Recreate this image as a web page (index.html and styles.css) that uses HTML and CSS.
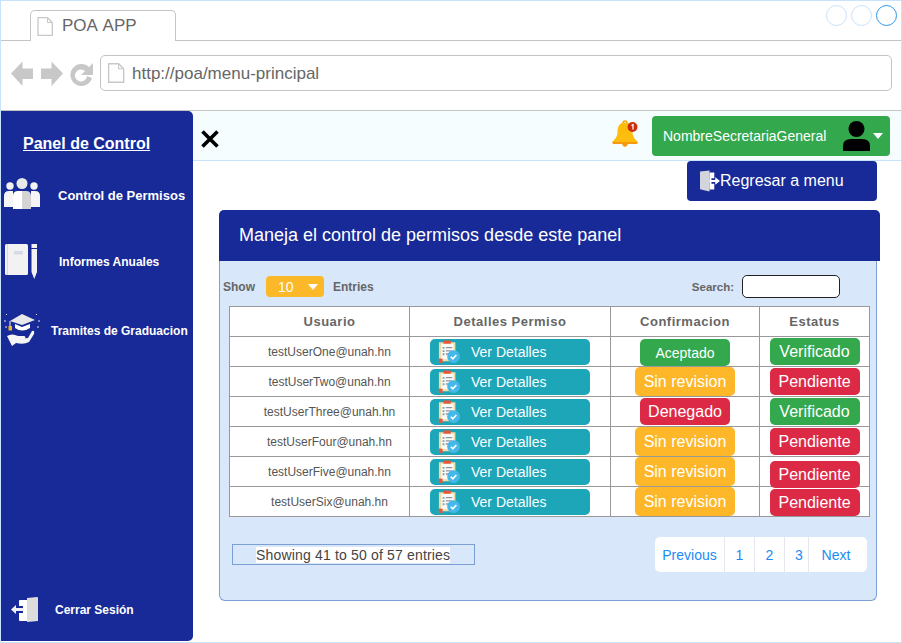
FILE: index.html
```html
<!DOCTYPE html>
<html lang="en">
<head>
    <meta charset="UTF-8">
    <meta name="viewport" content="width=device-width, initial-scale=1.0">
    <title>POA APP</title>
    <link rel="stylesheet" href="styles.css">
</head>
<body>

    <!-- shared icons -->
    <svg class="icon-defs" width="0" height="0">
        <symbol id="fileIcon" viewBox="0 0 16 19">
            <path d="M1 .7H10.500L15.300 5.500V18.300H1Z" fill="#fff" stroke="currentColor" stroke-width="1.300"/>
            <path d="M10.500 .7V5.500H15.300" fill="none" stroke="currentColor" stroke-width="1"/>
        </symbol>
        <symbol id="clipIcon" viewBox="0 0 24 25">
            <path d="M1 2.500H19V23H5L1 25Z" fill="#f3d9a4"/>
            <path d="M3.500 4H17V21H3.500Z" fill="#fbfbf5"/>
            <path d="M6 .5H14V4H6Z" fill="#e4573d"/>
            <path d="M1 20L5 20.500V25H1Z" fill="#e4573d"/>
            <path d="M5 7.500H7V9.500H5ZM8.500 7.500H15.500V9H8.500ZM5 11H7V13H5ZM8.500 11H15.500V12.500H8.500ZM5 14.500H7V16.500H5ZM8.500 14.500H13V16H8.500Z" fill="#8a99a8"/>
            <circle cx="17" cy="18" r="7" fill="#45b8ea"/>
            <path d="M14 18.200L16.200 20.400L20 16.300" fill="none" stroke="#fff" stroke-width="1.800"/>
        </symbol>
    </svg>

    <div class="window">

        <div class="tab-row">
            <div class="tab">
                <svg class="tab-file" width="16" height="19"><use href="#fileIcon"/></svg>
                <span>POA APP</span>
            </div>
            <div class="win-buttons">
                <span class="win-btn"></span>
                <span class="win-btn"></span>
                <span class="win-btn active"></span>
            </div>
        </div>

        <div class="address-row">
            <svg class="nav-icons" width="84" height="26" viewBox="0 0 84 26">
                <path d="M0 12.500L11.500 .5V7.500H22V18H11.500V25Z" fill="#c8c8c8"/>
                <path d="M52 12.500L40.500 .5V7.500H30V18H40.500V25Z" fill="#c8c8c8"/>
                <path d="M81 17A11 11 0 1 1 78 6L82 2V14H70L74 10A6 6 0 1 0 76 15Z" fill="#c8c8c8"/>
            </svg>
            <div class="url-bar">
                <svg class="url-file" width="18" height="20"><use href="#fileIcon"/></svg>
                <span>http://poa/menu-principal</span>
            </div>
        </div>

        <div class="app">

            <aside class="sidebar">
                <h2 class="side-title">Panel de Control</h2>

                <a class="side-item item-permisos">
                    <svg width="36" height="32" viewBox="0 0 36 32">
                        <circle cx="6" cy="8" r="3.700" fill="#f2f2f2"/>
                        <circle cx="30" cy="8" r="3.700" fill="#f2f2f2"/>
                        <path d="M0 29V18Q0 13 5 13H9V29Z" fill="#f5f5f5"/>
                        <path d="M36 29V18Q36 13 31 13H27V29Z" fill="#f5f5f5"/>
                        <circle cx="18" cy="5.500" r="5.500" fill="#e8e8e8"/>
                        <path d="M9 31V18Q9 13 14 13H18V31Z" fill="#fff"/>
                        <path d="M27 31V18Q27 13 22 13H18V31Z" fill="#d4d4d4"/>
                    </svg>
                    <span>Control de Permisos</span>
                </a>

                <a class="side-item item-informes">
                    <svg width="33" height="35" viewBox="0 0 33 35">
                        <rect x="0" y="0" width="23" height="31" rx="1.500" fill="#f2f2f2"/>
                        <rect x="2" y="0" width="1" height="31" fill="#d8d8d8"/>
                        <rect x="9" y="7" width="9" height="3.500" fill="#d4dbe6"/>
                        <path d="M26.500 0H32V4H26.500ZM26.500 5H32V28L29.250 35L26.500 28Z" fill="#f2f2f2"/>
                    </svg>
                    <span>Informes Anuales</span>
                </a>

                <a class="side-item item-tramites">
                    <svg width="36" height="34" viewBox="0 0 36 34">
                        <path d="M6 9L18 2L31 8L18 13Z" fill="#e8e8e8"/>
                        <path d="M11 12V16Q18 21 26 16V12L18 15Z" fill="#fff"/>
                        <path d="M6 9V14" stroke="#f5f5f5" stroke-width="1"/>
                        <rect x="4.500" y="14" width="3.500" height="4.500" fill="#f0b429"/>
                        <path d="M3 24Q8 21 14 24H20Q23 25 20 27H14L24 26L28 19Q31 18 30 22L25 30Q20 33 12 31L8 34Z" fill="#f5f5f5"/>
                        <path d="M0 9H2M2 2L3 3M34 9H36M33 2L32 3M1 15H3M33 15H35" stroke="#dfe3f0" stroke-width="1"/>
                    </svg>
                    <span>Tramites de Graduacion</span>
                </a>

                <a class="side-item item-cerrar">
                    <svg width="28" height="27" viewBox="0 0 28 27">
                        <path d="M9 4H17V25H9Q8 25 8 24V17H12V10H8V5Q8 4 9 4Z" fill="#fff"/>
                        <path d="M16 2L26 1Q27 1 27 2V25L16 26Z" fill="#dcdcdc"/>
                        <path d="M0 13.500L5 9V12H13V15H5V18Z" fill="#f0f0f0"/>
                    </svg>
                    <span>Cerrar Sesión</span>
                </a>
            </aside>

            <main class="main">
                <div class="topbar">
                    <svg class="close-icon" width="20" height="20" viewBox="0 0 20 20">
                        <path d="M2.500 2.500L17.500 17.500M17.500 2.500L2.500 17.500" stroke="#000" stroke-width="3.600"/>
                    </svg>
                    <svg class="bell-icon" width="28" height="29" viewBox="0 0 28 29">
                        <path d="M12 4a2 2 0 0 1 4 0" fill="none" stroke="#f5a70f" stroke-width="1.500"/>
                        <path d="M14 3.500C8 3.500 6.500 8 6.500 13C6.500 18 4 20 1 23H27C24 20 21.500 18 21.500 13C21.500 8 20 3.500 14 3.500Z" fill="#fdbd0e"/>
                        <path d="M1 23H27L26 25H2Z" fill="#f59a10"/>
                        <path d="M11 25H17Q16 28 14 28Q12 28 11 25Z" fill="#f59a10"/>
                        <circle cx="21.500" cy="8" r="5" fill="#c9300f"/>
                        <path d="M20.500 6.500L22 5.500V10.500" fill="none" stroke="#fff" stroke-width="1.200"/>
                    </svg>
                    <div class="user-menu">
                        <span class="user-name">NombreSecretariaGeneral</span>
                        <svg class="user-icon" width="27" height="30" viewBox="0 0 27 30">
                            <circle cx="13.500" cy="8" r="8" fill="#000"/>
                            <path d="M0 30V25Q0 18 8 18H19Q27 18 27 25V30Z" fill="#000"/>
                        </svg>
                        <span class="caret"></span>
                    </div>
                </div>

                <div class="back-row">
                    <button class="back-btn">
                        <svg width="20" height="22" viewBox="0 0 21 22">
                            <path d="M0 1L10 0V22L1 20Q0 20 0 19Z" fill="#d2d6dc"/>
                            <path d="M10 2H15V8H12V14H15V20H10Z" fill="#fff"/>
                            <path d="M21 11L16 7V10H10V12H16V15Z" fill="#fff"/>
                        </svg>
                        <span>Regresar a menu</span>
                    </button>
                </div>

                <section class="panel">
                    <h1 class="panel-head">Maneja el control de permisos desde este panel</h1>
                    <div class="panel-body">

                        <div class="table-controls">
                            <label class="ctl-label">Show</label>
                            <div class="entries-select"><span>10</span><span class="caret"></span></div>
                            <label class="ctl-label">Entries</label>
                            <label class="ctl-label search-label">Search:</label>
                            <input class="search-input" type="text">
                        </div>

                        <table class="permits">
                            <thead>
                                <tr>
                                    <th class="col-user">Usuario</th>
                                    <th class="col-detail">Detalles Permiso</th>
                                    <th class="col-conf">Confirmacion</th>
                                    <th>Estatus</th>
                                </tr>
                            </thead>
                            <tbody>
                                <tr>
                                    <td class="user-cell">testUserOne@unah.hn</td>
                                    <td><a class="detail-btn"><svg width="22" height="23"><use href="#clipIcon"/></svg>Ver Detalles</a></td>
                                    <td><span class="pill pill-small pill-nudge green">Aceptado</span></td>
                                    <td><span class="pill green">Verificado</span></td>
                                </tr>
                                <tr>
                                    <td class="user-cell">testUserTwo@unah.hn</td>
                                    <td><a class="detail-btn"><svg width="22" height="23"><use href="#clipIcon"/></svg>Ver Detalles</a></td>
                                    <td><span class="pill pill-wide yellow">Sin revision</span></td>
                                    <td><span class="pill red">Pendiente</span></td>
                                </tr>
                                <tr>
                                    <td class="user-cell">testUserThree@unah.hn</td>
                                    <td><a class="detail-btn"><svg width="22" height="23"><use href="#clipIcon"/></svg>Ver Detalles</a></td>
                                    <td><span class="pill red">Denegado</span></td>
                                    <td><span class="pill green">Verificado</span></td>
                                </tr>
                                <tr>
                                    <td class="user-cell">testUserFour@unah.hn</td>
                                    <td><a class="detail-btn"><svg width="22" height="23"><use href="#clipIcon"/></svg>Ver Detalles</a></td>
                                    <td><span class="pill pill-wide yellow">Sin revision</span></td>
                                    <td><span class="pill red">Pendiente</span></td>
                                </tr>
                                <tr>
                                    <td class="user-cell">testUserFive@unah.hn</td>
                                    <td><a class="detail-btn"><svg width="22" height="23"><use href="#clipIcon"/></svg>Ver Detalles</a></td>
                                    <td><span class="pill pill-wide yellow">Sin revision</span></td>
                                    <td><span class="pill pill-low red">Pendiente</span></td>
                                </tr>
                                <tr>
                                    <td class="user-cell">testUserSix@unah.hn</td>
                                    <td><a class="detail-btn"><svg width="22" height="23"><use href="#clipIcon"/></svg>Ver Detalles</a></td>
                                    <td><span class="pill pill-wide yellow">Sin revision</span></td>
                                    <td><span class="pill pill-nudge red">Pendiente</span></td>
                                </tr>
                            </tbody>
                        </table>

                        <div class="table-footer">
                            <div class="showing"><span>Showing 41 to 50 of 57 entries</span></div>
                            <div class="pager">
                                <a class="page-prev">Previous</a>
                                <a class="page-num">1</a>
                                <a class="page-num">2</a>
                                <a class="page-three">3</a>
                                <a class="page-next">Next</a>
                            </div>
                        </div>

                    </div>
                </section>
            </main>

        </div>
    </div>

</body>
</html>
```

FILE: styles.css
```css
* {
    box-sizing: border-box;
}
body {
    margin: 0;
    font-family: "Liberation Sans", Arial, sans-serif;
    background: #fff;
    overflow: hidden;
}
.icon-defs {
    display: block;
    height: 0;
}
.window {
    width: 902px;
    height: 643px;
    border: 1px solid #c8e2fb;
    display: flex;
    flex-direction: column;
}

/* browser chrome */
.tab-row {
    height: 40px;
    display: flex;
    padding-left: 29px;
    border-bottom: 1px solid #c4c4c4;
}
.tab {
    width: 146px;
    height: 31px;
    margin-top: 9px;
    padding-left: 6px;
    display: flex;
    align-items: center;
    gap: 9px;
    border: 1px solid #c4c4c4;
    border-bottom: none;
    border-radius: 5px 5px 0 0;
    background: #fff;
    color: #666;
    font-size: 17px;
    font-kerning: none;
}
.tab-file {
    color: #c8c8c8;
}
.win-buttons {
    margin-left: auto;
    padding: 4px 4px 0 0;
    display: flex;
    gap: 4px;
}
.win-btn {
    width: 21px;
    height: 21px;
    border: 1px solid #c8e2fb;
    border-radius: 50%;
}
.win-btn.active {
    border-color: #2c96ee;
}
.address-row {
    height: 70px;
    display: flex;
    align-items: flex-start;
    padding: 14px 0 0 10px;
    border-bottom: 1px solid #c4c4c4;
}
.nav-icons {
    margin-top: 6px;
}
.url-bar {
    width: 792px;
    height: 36px;
    margin-left: 5px;
    padding-left: 6px;
    display: flex;
    align-items: center;
    gap: 7px;
    border: 1px solid #c4c4c4;
    border-radius: 5px;
    color: #666;
    font-size: 17px;
}
.url-bar span {
    margin-top: 2px;
}
.url-file {
    color: #c8c8c8;
}

/* app */
.app {
    flex: 1;
    display: flex;
    min-height: 0;
}
.sidebar {
    width: 192px;
    height: 530px;
    background: #172a98;
    border-radius: 0 5px 5px 0;
    color: #fff;
    display: flex;
    flex-direction: column;
}
.side-title {
    margin: 24px 0 0 22px;
    font-size: 16px;
    line-height: 18px;
    font-weight: bold;
    text-decoration: underline;
}
.side-item {
    display: flex;
    align-items: center;
    font-weight: bold;
    font-size: 13px;
    white-space: nowrap;
}
.item-permisos {
    margin: 25px 0 0 3px;
    gap: 18px;
}
.item-permisos span,
.item-tramites span {
    margin-top: 3px;
}
.item-informes {
    margin: 34px 0 0 4px;
    gap: 21px;
    font-size: 12px;
}
.item-tramites {
    margin: 33px 0 0 3px;
    gap: 11px;
    font-size: 12px;
}
.item-cerrar {
    margin: auto 0 18px 10px;
    gap: 16px;
    font-size: 12px;
}
.main {
    flex: 1;
    min-width: 0;
}
.topbar {
    height: 50px;
    display: flex;
    align-items: center;
    padding-left: 7px;
    background: #f5fdff;
    border-bottom: 1px solid #c8e2fb;
}
.close-icon {
    margin-top: 6px;
}
.bell-icon {
    margin-left: auto;
    margin-right: 13px;
    margin-bottom: 4px;
}
.user-menu {
    width: 238px;
    height: 40px;
    margin-right: 11px;
    margin-top: 1px;
    padding-left: 11px;
    display: flex;
    align-items: center;
    background: #34a84c;
    border-radius: 4px;
    color: #fff;
    font-size: 14px;
}
.user-icon {
    margin-left: 17px;
}
.caret {
    width: 0;
    height: 0;
    margin-left: 3px;
    border-left: 5px solid transparent;
    border-right: 5px solid transparent;
    border-top: 6px solid #fff;
}
.back-row {
    display: flex;
    justify-content: flex-end;
    padding-right: 24px;
}
.back-btn {
    width: 190px;
    height: 40px;
    padding: 0 0 0 13px;
    display: flex;
    align-items: center;
    background: #172a98;
    border: none;
    border-radius: 4px;
    color: #fff;
    font-family: inherit;
    font-size: 16px;
}

/* panel */
.panel {
    width: 661px;
    margin: 9px 0 0 26px;
}
.panel-head {
    height: 51px;
    margin: 0;
    padding-left: 20px;
    display: flex;
    align-items: center;
    background: #172a98;
    border-radius: 5px 5px 0 0;
    color: #fff;
    font-size: 18px;
    font-weight: normal;
}
.panel-body {
    width: 658px;
    height: 340px;
    padding-top: 14px;
    background: #d8e7fa;
    border: 1px solid #7b9fd4;
    border-top: none;
    border-radius: 0 0 6px 6px;
}
.table-controls {
    height: 23px;
    display: flex;
    align-items: center;
    padding: 0 36px 0 3px;
}
.ctl-label {
    color: #666;
    font-size: 12px;
    font-weight: bold;
}
.entries-select {
    width: 58px;
    height: 21px;
    margin: 0 9px 0 11px;
    padding: 0 6px 0 12px;
    display: flex;
    align-items: center;
    justify-content: space-between;
    background: #fbb829;
    border-radius: 4px;
    color: #fff;
    font-size: 14px;
}
.search-label {
    margin-left: auto;
    margin-right: 8px;
    font-size: 11.500px;
}
.search-input {
    width: 98px;
    height: 23px;
    border: 1px solid #222;
    border-radius: 5px;
    background: #fff;
}

/* table */
.permits {
    width: 641px;
    margin: 8px 0 0 9px;
    border-collapse: collapse;
    table-layout: fixed;
    background: #fff;
}
.permits th,
.permits td {
    height: 30px;
    padding: 0;
    border: 1px solid #999;
    text-align: center;
    vertical-align: middle;
    line-height: 0;
}
.permits th {
    color: #666;
    font-size: 13px;
    letter-spacing: .5px;
    line-height: normal;
}
.permits .col-user {
    width: 180px;
    padding-left: 20px;
}
.col-detail {
    width: 201px;
}
.col-conf {
    width: 149px;
}
.permits .user-cell {
    padding-left: 20px;
    color: #555;
    font-size: 12px;
    line-height: normal;
}
.detail-btn {
    width: 160px;
    height: 26px;
    padding-left: 8px;
    display: inline-flex;
    align-items: center;
    gap: 11px;
    vertical-align: middle;
    background: #1da5b8;
    border-radius: 5px;
    color: #fff;
    font-size: 14px;
    line-height: normal;
}
.pill {
    width: 90px;
    height: 27px;
    display: inline-flex;
    align-items: center;
    justify-content: center;
    vertical-align: middle;
    border-radius: 5px;
    color: #fff;
    font-size: 16px;
    line-height: normal;
}
.pill-small {
    font-size: 14px;
}
.pill-wide {
    width: 100px;
    height: 29px;
}
.pill-nudge {
    transform: translateY(1px);
}
.pill-low {
    transform: translateY(3px);
}
.green {
    background: #34a84c;
}
.yellow {
    background: #fdb728;
}
.red {
    background: #dc2a46;
}

/* footer of the table */
.table-footer {
    margin-top: 20px;
    padding: 0 9px 0 12px;
    display: flex;
    align-items: center;
    justify-content: space-between;
}
.showing {
    width: 243px;
    height: 21px;
    padding-left: 23px;
    display: flex;
    align-items: center;
    border: 1px solid #7b9fd4;
    color: #444;
    font-size: 14px;
}
.showing span {
    background: #fff;
    letter-spacing: .17px;
}
.pager {
    height: 35px;
    display: flex;
    background: #fff;
    border-radius: 5px;
    color: #1b8cf5;
    font-size: 14px;
}
.pager a {
    display: flex;
    align-items: center;
    justify-content: center;
    border-right: 1px solid #e4e8ee;
}
.pager a:last-child {
    border-right: none;
}
.page-prev {
    width: 70px;
}
.page-num {
    width: 30px;
}
.page-three {
    width: 24px;
    padding-left: 5px;
}
.page-next {
    width: 58px;
    padding-right: 4px;
}
```
